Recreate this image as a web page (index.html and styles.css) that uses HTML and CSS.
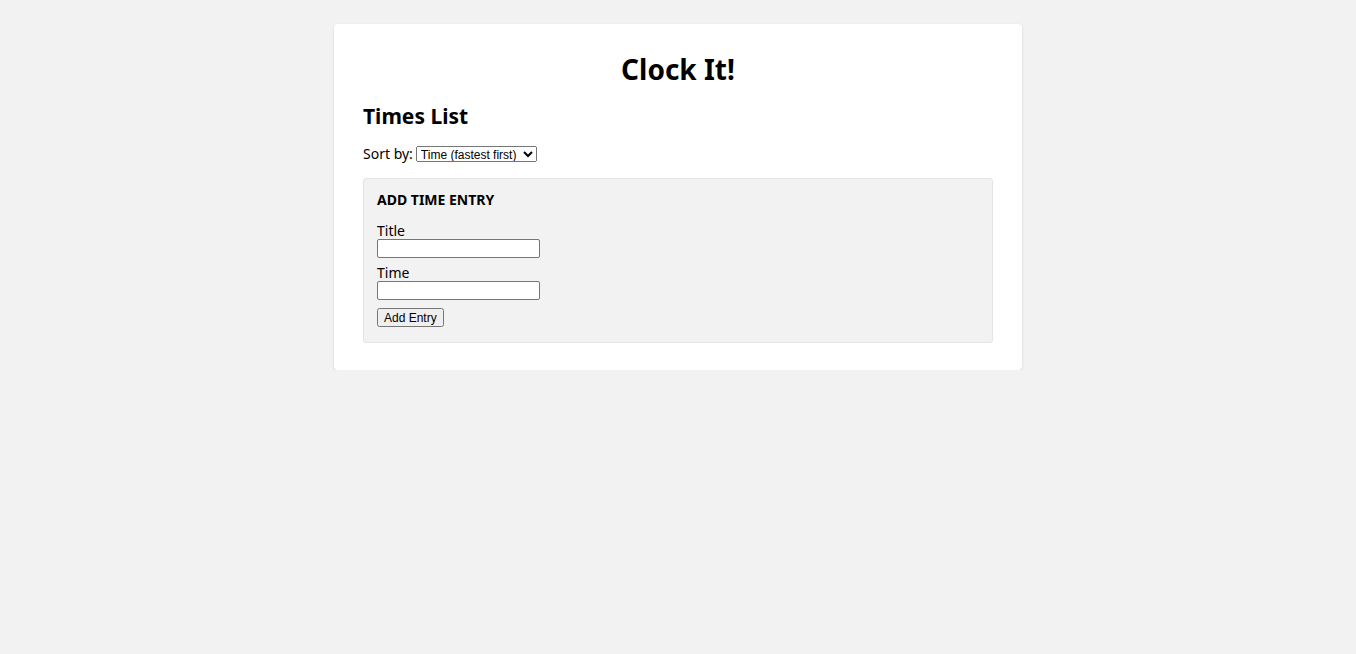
FILE: index.html
```html
<!DOCTYPE html>
<html>
<head>
<meta charset="utf-8">
<link rel="stylesheet" href="styles.css">
</head>
<body>
<div class="card">
  <h1 class="title">Clock It!</h1>
  <h2 class="subtitle">Times List</h2>
  <div class="sort">
    <label class="sort-label">Sort by:</label>
    <select class="sort-select">
      <option>Time (fastest first)</option>
    </select>
  </div>
  <div class="entry-box">
    <h3 class="entry-title">ADD TIME ENTRY</h3>
    <div class="field">
      <label class="field-label">Title</label>
      <input class="field-input" type="text">
    </div>
    <div class="field">
      <label class="field-label">Time</label>
      <input class="field-input" type="text">
    </div>
    <button class="add-btn">Add Entry</button>
  </div>
</div>
</body>
</html>
```
FILE: styles.css
```css
html, body {
  margin: 0;
  padding: 0;
}
body {
  background: #f2f2f2;
  font-family: "Noto Sans", "Open Sans", sans-serif;
  font-size: 14px;
  color: #000;
}
.card {
  width: 688px;
  box-sizing: border-box;
  margin: 24px auto 0;
  background: #fff;
  border-radius: 4px;
  box-shadow: 0 1px 3px rgba(0,0,0,0.12);
  padding: 25px 29px 27px;
}
.title {
  margin: 0;
  text-align: center;
  font-size: 28px;
  font-weight: 700;
  line-height: 40px;
}
.subtitle {
  margin: 13px 0 0;
  font-size: 21px;
  font-weight: 700;
  line-height: 28px;
}
.sort {
  margin-top: 14px;
  display: flex;
  align-items: center;
  gap: 3px;
  height: 20px;
}
.sort-label {
  line-height: 20px;
}
.sort-select {
  font-family: "Liberation Sans", Arial, sans-serif;
  font-size: 12px;
  height: 16px;
  width: 121px;
  padding: 0;
  margin: 0;
}
.entry-box {
  margin-top: 14px;
  background: #f2f2f2;
  border: 1px solid #e4e4e4;
  border-radius: 3px;
  padding: 11px 13px 15px;
}
.entry-title {
  margin: 0 0 13px;
  font-size: 14px;
  font-weight: 700;
  line-height: 20px;
}
.field {
  display: flex;
  flex-direction: column;
  align-items: flex-start;
  margin-bottom: 7px;
}
.field-label {
  line-height: 16px;
}
.field-input {
  width: 163px;
  height: 19px;
  box-sizing: border-box;
  margin: 0;
  border: 1px solid #767676;
  border-radius: 2px;
  padding: 1px 2px;
  font-size: 13px;
}
.add-btn {
  display: block;
  font-family: "Liberation Sans", Arial, sans-serif;
  font-size: 12px;
  height: 19px;
  padding: 0 5px;
  margin: 8px 0 0;
}
```
